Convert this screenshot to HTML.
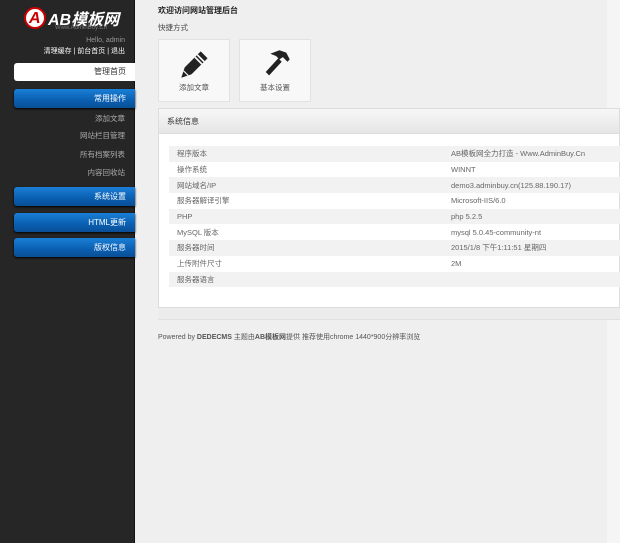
<!DOCTYPE html>
<html><head><meta charset="utf-8"><style>
*{margin:0;padding:0;box-sizing:border-box}
body{width:620px;height:543px;overflow:hidden;background:#efefef;font-family:"Liberation Sans","Noto Sans CJK SC",sans-serif;font-size:8px;color:#333;position:relative}
#side{position:absolute;left:0;top:0;width:135px;height:543px;background:#262626;border-right:1px solid #111}
.logo{position:absolute;left:24px;top:7px;width:22px;height:22px;border-radius:50%;background:#fff;border:2px solid #c00}
.logo b{position:absolute;left:3px;top:1px;color:#c00;font-size:16px;font-style:italic;font-weight:bold}
.lt{position:absolute;left:48px;top:6px;color:#fff;font-size:16px;font-weight:bold;font-style:italic}
.ls{position:absolute;left:55px;top:25px;color:#777;font-size:6px}
.hi{position:absolute;right:9px;top:37px;color:#999;font-size:7px}
.lk{position:absolute;right:9px;top:46px;color:#fff;font-size:7px}
.home{position:absolute;left:14px;top:63px;width:121px;height:18px;background:#fff;color:#333;text-align:right;padding-right:9px;line-height:18px;font-size:8px;border-radius:3px 0 0 3px}
.bb{position:absolute;left:14px;width:121px;height:19px;background:linear-gradient(#1a7fd6,#0a5eb0 60%,#094f96);color:#fff;text-align:right;padding-right:9px;line-height:19px;font-size:8px;border-radius:3px 0 0 3px;box-shadow:0 1px 2px #000}
.sub{position:absolute;right:9px;color:#aaa;font-size:7.5px}
.edge{position:absolute;left:607px;top:0;width:13px;height:543px;background:#f5f5f5}
.t1{position:absolute;left:158px;top:5px;font-size:8px;color:#222;font-weight:bold}
.t2{position:absolute;left:158px;top:22px;font-size:7.5px;color:#444}
.qb{position:absolute;top:39px;width:72px;height:63px;background:#f8f8f8;border:1px solid #e2e2e2;text-align:center}
.qb span{position:absolute;left:0;right:0;bottom:8px;font-size:7.5px;color:#555}
.qb svg{position:absolute;left:20px;top:8px}
.panel{position:absolute;left:158px;top:108px;width:462px;height:200px;background:#fff;border:1px solid #ddd}
.band{position:absolute;left:158px;top:308px;width:462px;height:12px;background:#ececec;border-bottom:1px solid #e0e0e0}
.ph{height:25px;background:linear-gradient(#f7f7f7,#e6e6e6);border-bottom:1px solid #ddd;line-height:25px;padding-left:8px;font-size:8px;color:#333}
table{position:absolute;left:10px;top:37px;width:452px;border-collapse:collapse;table-layout:fixed}
td{height:15.7px;font-size:7.5px;color:#666;padding-left:8px;white-space:nowrap}
td.k{width:274px}
tr:nth-child(odd) td{background:#f2f2f2}
.foot{position:absolute;left:158px;top:332px;font-size:7px;color:#555}
</style></head><body>
<div id="side">
<div class="logo"><b>A</b></div>
<div class="lt">AB模板网</div>
<div class="ls">Www.AdminBuy.Cn</div>
<div class="hi">Hello, admin</div>
<div class="lk">清理缓存 | 前台首页 | 退出</div>
<div class="home">管理首页</div>
<div class="bb" style="top:89px">常用操作</div>
<div class="sub" style="top:113px">添加文章</div>
<div class="sub" style="top:130px">网站栏目管理</div>
<div class="sub" style="top:149px">所有档案列表</div>
<div class="sub" style="top:167px">内容回收站</div>
<div class="bb" style="top:187px">系统设置</div>
<div class="bb" style="top:213px">HTML更新</div>
<div class="bb" style="top:238px">版权信息</div>
</div>
<div class="edge"></div>
<div class="t1">欢迎访问网站管理后台</div>
<div class="t2">快捷方式</div>
<div class="qb" style="left:158px"><svg width="32" height="32" viewBox="0 0 28 28"><path d="M19 3l6 6-14 14-9 3 3-9z" fill="#222"/><path d="M16 6l6 6M14 8l6 6" stroke="#f8f8f8" stroke-width="1.5"/><path d="M4 20l4 4" stroke="#f8f8f8" stroke-width="1"/></svg><span>添加文章</span></div>
<div class="qb" style="left:239px"><svg width="32" height="32" viewBox="0 0 28 28"><path d="M9 5l8-3 6 2 3 6-2 2-4-4-3 2 2 2-11 12-3-3 11-12-2-2z" fill="#222"/></svg><span>基本设置</span></div>
<div class="panel"><div class="ph">系统信息</div>
<table>
<tr><td class="k">程序版本</td><td>AB模板网全力打造 - Www.AdminBuy.Cn</td></tr>
<tr><td class="k">操作系统</td><td>WINNT</td></tr>
<tr><td class="k">网站域名/IP</td><td>demo3.adminbuy.cn(125.88.190.17)</td></tr>
<tr><td class="k">服务器解译引擎</td><td>Microsoft-IIS/6.0</td></tr>
<tr><td class="k">PHP</td><td>php 5.2.5</td></tr>
<tr><td class="k">MySQL 版本</td><td>mysql 5.0.45-community-nt</td></tr>
<tr><td class="k">服务器时间</td><td>2015/1/8 下午1:11:51 星期四</td></tr>
<tr><td class="k">上传附件尺寸</td><td>2M</td></tr>
<tr><td class="k">服务器语言</td><td></td></tr>
</table></div>
<div class="band"></div>
<div class="foot">Powered by <b>DEDECMS</b> 主题由<b>AB模板网</b>提供 推荐使用chrome 1440*900分辨率浏览</div>
</body></html>
